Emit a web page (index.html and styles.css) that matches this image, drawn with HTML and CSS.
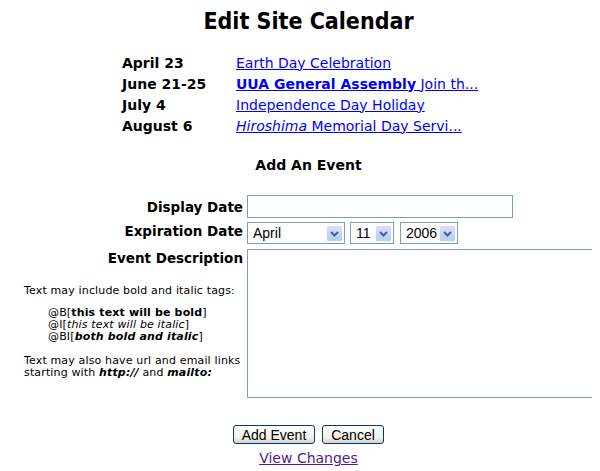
FILE: index.html
```html
<!DOCTYPE html>
<html>
<head>
<meta charset="utf-8">
<link rel="stylesheet" href="styles.css">
</head>
<body>
<div class="panel">
<h1 class="title">Edit Site Calendar</h1>
<div class="calendar">
  <div class="cal-date">April 23</div>
  <div class="cal-event"><a href="#">Earth Day Celebration</a></div>
  <div class="cal-date">June 21-25</div>
  <div class="cal-event"><a href="#"><b>UUA General Assembly</b> Join th...</a></div>
  <div class="cal-date">July 4</div>
  <div class="cal-event"><a href="#">Independence Day Holiday</a></div>
  <div class="cal-date">August 6</div>
  <div class="cal-event"><a href="#"><i>Hiroshima</i> Memorial Day Servi...</a></div>
</div>
<h2 class="subtitle">Add An Event</h2>
<form class="event-form">
  <label class="label row1">Display Date</label>
  <div class="field"><input type="text" class="text-input"></div>

  <label class="label row2">Expiration Date</label>
  <div class="field selects">
    <div class="select-box month"><select><option>April</option></select><span class="arrow"><svg width="15" height="15" viewBox="0 0 15 15"><path d="M4 6 L7.5 9.5 L11 6" fill="none" stroke="#4d6185" stroke-width="2"/></svg></span></div>
    <div class="select-box day"><select><option>11</option></select><span class="arrow"><svg width="15" height="15" viewBox="0 0 15 15"><path d="M4 6 L7.5 9.5 L11 6" fill="none" stroke="#4d6185" stroke-width="2"/></svg></span></div>
    <div class="select-box year"><select><option>2006</option></select><span class="arrow"><svg width="15" height="15" viewBox="0 0 15 15"><path d="M4 6 L7.5 9.5 L11 6" fill="none" stroke="#4d6185" stroke-width="2"/></svg></span></div>
  </div>

  <div class="desc-col">
    <div class="label">Event Description</div>
    <div class="help">
      <p class="first">Text may include bold and italic tags:</p>
      <p class="tags">@B[<b>this text will be bold</b>]<br>@I[<i>this text will be italic</i>]<br>@BI[<b><i>both bold and italic</i></b>]</p>
      <p>Text may also have url and email links<br>starting with <b><i>http://</i></b> and <b><i>mailto:</i></b></p>
    </div>
  </div>
  <div class="field desc-field"><textarea class="desc"></textarea></div>
</form>
<div class="buttons">
  <button type="button" class="btn btn-add">Add Event</button>
  <button type="button" class="btn btn-cancel">Cancel</button>
</div>
<div class="view"><a href="#" class="visited">View Changes</a></div>
</div>
</body>
</html>
```

FILE: styles.css
```css
body {
  margin: 8px;
  background: #fff;
  color: #000;
  font-family: "DejaVu Sans", Verdana, sans-serif;
}
.panel {
  width: 569px;
  margin-left: 16px;
}
.title {
  margin: 0;
  font-family: "DejaVu Sans Condensed", "DejaVu Sans", sans-serif;
  font-stretch: condensed;
  font-size: 23px;
  line-height: 27px;
  text-align: center;
  font-weight: bold;
}
.calendar {
  display: grid;
  grid-template-columns: 114px auto;
  grid-auto-rows: 21px;
  align-items: center;
  margin: 17px 0 0 98px;
  font-size: 14px;
}
.cal-date { font-weight: bold; }
.calendar a { color: #0000ff; }
.subtitle {
  margin: 21px 0 0 0;
  font-size: 14px;
  line-height: 17px;
  font-weight: bold;
  text-align: center;
}
.event-form {
  display: grid;
  grid-template-columns: 219px 346px;
  column-gap: 4px;
  margin: 21px 0 0 0;
}
.label {
  font-size: 13.5px;
  font-weight: bold;
  text-align: right;
  align-self: center;
}
.field { display: flex; align-items: center; }
.text-input {
  box-sizing: border-box;
  width: 266px;
  height: 23px;
  border: 1px solid #7f9db9;
  margin: 0;
  padding: 1px 3px;
  font: 13px "Liberation Sans", Arial, sans-serif;
}
.selects {
  margin-top: 4px;
  gap: 5px;
}
.select-box {
  box-sizing: border-box;
  display: flex;
  align-items: center;
  height: 22px;
  border: 1px solid #7f9db9;
  padding: 2px;
  background: #fff;
}
.select-box select {
  appearance: none;
  -webkit-appearance: none;
  border: 0;
  outline: 0;
  background: transparent;
  flex: 1;
  min-width: 0;
  padding: 0 0 0 3px;
  margin: 0;
  font: 14px "Liberation Sans", Arial, sans-serif;
  color: #000;
}
.arrow {
  display: flex;
  width: 15px;
  height: 15px;
  background: linear-gradient(#d6e2fd, #b6caf6);
  border-radius: 1px;
}
.month { width: 98px; }
.day { width: 44px; }
.year { width: 58px; margin-left: 1px; }
.desc-col {
  display: flex;
  flex-direction: column;
  margin-top: 6px;
}
.desc-col .label {
  align-self: stretch;
  line-height: 17px;
}
.help {
  margin-top: 18px;
  font-size: 11px;
  letter-spacing: 0.15px;
  line-height: 12px;
}
.help p { margin: 0 0 12px 0; }
.help p.first { margin-bottom: 10px; }
.help .tags { padding-left: 24px; }
.desc-field { align-items: flex-start; margin-top: 5px; }
.desc {
  box-sizing: border-box;
  width: 346px;
  height: 149px;
  border: 1px solid #7f9db9;
  margin: 0;
  resize: none;
}
.buttons {
  display: flex;
  justify-content: center;
  gap: 7px;
  margin-top: 27px;
}
.btn {
  box-sizing: border-box;
  height: 19px;
  padding: 0 4px;
  border: 1px solid #003c74;
  border-radius: 3px;
  background: linear-gradient(#ffffff, #f0efea 70%, #d6d0c5);
  font: 14px "Liberation Sans", Arial, sans-serif;
  line-height: 16px;
  color: #000;
}
.btn-add { width: 82px; }
.btn-cancel { width: 62px; }
.view {
  text-align: center;
  margin-top: 6px;
  font-size: 14px;
}
.view a.visited { color: #551a8b; }
```
